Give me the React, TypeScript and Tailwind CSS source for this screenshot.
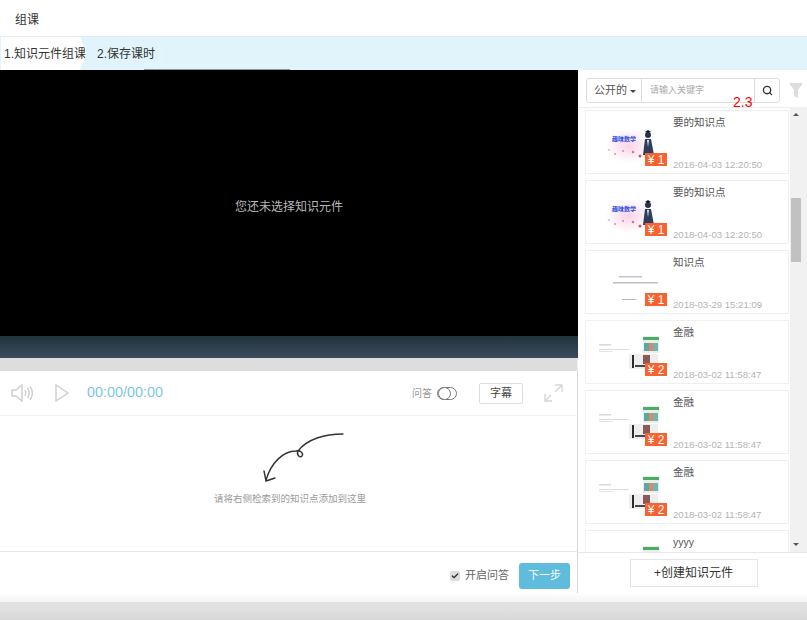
import { Search, Check } from "lucide-react";

type Course = {
  title: string;
  date?: string;
  price?: number;
  thumb: "teach" | "text" | "finance";
};

// last row is cut off by the list, only its title shows
const courses: Course[] = [
  { title: "要的知识点", date: "2018-04-03 12:20:50", price: 1, thumb: "teach" },
  { title: "要的知识点", date: "2018-04-03 12:20:50", price: 1, thumb: "teach" },
  { title: "知识点", date: "2018-03-29 15:21:09", price: 1, thumb: "text" },
  { title: "金融", date: "2018-03-02 11:58:47", price: 2, thumb: "finance" },
  { title: "金融", date: "2018-03-02 11:58:47", price: 2, thumb: "finance" },
  { title: "金融", date: "2018-03-02 11:58:47", price: 2, thumb: "finance" },
  { title: "yyyy", thumb: "finance" },
];

// thumbnails are drawn in card pixels (87x62)
function Thumb({ kind }: { kind: Course["thumb"] }) {
  if (kind === "teach") {
    return (
      <svg width="87" height="62" viewBox="0 0 87 62">
        <defs>
          <radialGradient id="pinkGlow">
            <stop offset="0%" stopColor="#f8d3e8" />
            <stop offset="100%" stopColor="#ffffff" />
          </radialGradient>
        </defs>
        <ellipse cx="43" cy="35" rx="24" ry="17" fill="url(#pinkGlow)" />
        <text x="26" y="30" fontSize="6" fontWeight="700" fill="#2f4ee0">趣味数学</text>
        <circle cx="62" cy="24" r="3" fill="#2b3248" />
        <path d="M59 21l3-2 3 2-3 1z" fill="#161a28" />
        <path d="M59 28h6l3 16H57z" fill="#2f3d5c" />
        <path d="M61 29l1 7 1-7z" fill="#e8e8ee" />
        <circle cx="23" cy="39" r="1" fill="#e7b4bf" />
        <circle cx="29" cy="43" r="1" fill="#dc8f9d" />
        <circle cx="37" cy="40" r="1.100" fill="#dc8f9d" />
        <circle cx="47" cy="41" r="1.300" fill="#d27b8d" />
        <circle cx="54" cy="45" r="1.500" fill="#bf5d72" />
      </svg>
    );
  }
  if (kind === "text") {
    return (
      <svg width="87" height="62" viewBox="0 0 87 62">
        <rect x="33" y="25" width="23" height="1.500" fill="#c4c4ca" />
        <rect x="27" y="31" width="45" height="1.500" fill="#bdbdc5" />
        <rect x="36" y="48" width="14" height="1" fill="#b8b8b8" />
      </svg>
    );
  }
  return (
    <svg width="87" height="62" viewBox="0 0 87 62">
      <rect x="13" y="23" width="12" height="1.500" fill="#d8d8d8" />
      <rect x="13" y="28" width="30" height="1" fill="#dcdcdc" />
      <rect x="13" y="30" width="14" height="1" fill="#e4e4e4" />
      <rect x="57" y="15" width="16" height="17" rx="1" fill="#e9eeec" />
      <rect x="57" y="16" width="16" height="3" fill="#49ad65" />
      <rect x="58" y="22" width="5" height="8" fill="#5ba8a2" />
      <rect x="63" y="22" width="4" height="8" fill="#d98a6a" />
      <rect x="67" y="22" width="5" height="8" fill="#6fb5b0" />
      <rect x="43" y="33" width="29" height="15" rx="1" fill="#eeeeee" />
      <rect x="46" y="34" width="2" height="13" fill="#2e2a2c" />
      <rect x="49" y="44" width="13" height="2" fill="#4a4446" />
      <rect x="57" y="34" width="7" height="9" fill="#8a5a58" />
    </svg>
  );
}

function CourseCard({ course }: { course: Course }) {
  return (
    <div className="flex h-[64px] shrink-0 border border-[#efefef] bg-white">
      <div className="relative w-[87px] shrink-0">
        <Thumb kind={course.thumb} />
        {course.price && (
          <div className="absolute left-[59px] top-[42px] flex h-[13px] w-[22px] items-center justify-center bg-[#f9612e] text-[12px] leading-none text-white">
            ¥ {course.price}
          </div>
        )}
      </div>
      <div className="flex flex-1 flex-col justify-between pb-[1px] pt-[3px]">
        <div className="text-[10.500px] leading-[16px] text-[#555]">{course.title}</div>
        {course.date && <div className="text-[9.600px] leading-[14px] text-[#b4b4b4]">{course.date}</div>}
      </div>
    </div>
  );
}

function SpeakerIcon() {
  return (
    <svg width="22" height="18" viewBox="0 0 22 18" fill="none" stroke="#d0d0d0" strokeWidth="1.500">
      <path d="M1 6h4l6-5v16l-6-5H1z" />
      <path d="M14 6c1 2 1 4 0 6M16.500 4c2 3 2 7 0 10M19 2.500c3 4 3 9 0 13" />
    </svg>
  );
}

function ExpandIcon() {
  return (
    <svg width="19" height="18" viewBox="0 0 19 18" fill="none" stroke="#d4d4d4" strokeWidth="1.400">
      <path d="M11 1h7v7M18 1l-7 7M1 10v7h7M1 17l6-6" />
    </svg>
  );
}

export default function App() {
  return (
    <div
      className="flex h-[620px] w-[807px] flex-col overflow-hidden bg-white text-[#333]"
      style={{ fontFamily: '"Liberation Sans", "Noto Sans CJK SC", sans-serif' }}
    >
      <div className="flex h-[36px] shrink-0 items-center pt-[3px] pl-[15px] text-[12px]">组课</div>

      <div className="relative flex h-[34px] shrink-0 border-t border-[#e5eaee] bg-[#e1f3fb] text-[12px]">
        <div className="ml-[1px] flex w-[86px] items-center whitespace-nowrap bg-white pl-[3px] [clip-path:polygon(0_0,79px_0,86px_50%,79px_100%,0_100%)]">
          1.知识元件组课
        </div>
        <div className="flex w-[76px] items-center whitespace-nowrap pl-[10px]">2.保存课时</div>
        <svg className="absolute left-[154px] top-0" width="10" height="33" viewBox="0 0 10 33" fill="none" stroke="#ecf6fa">
          <path d="M1 0l8 16.500L1 33" />
        </svg>
        <div className="absolute bottom-0 left-[144px] h-[1px] w-[146px] bg-[#8c979d]" />
      </div>

      <div className="flex h-[523px] shrink-0">
        <div className="flex w-[578px] shrink-0 flex-col">
          <div className="flex h-[266px] shrink-0 items-center justify-center bg-black pt-[7px] text-[12px] text-[#b9b9b9]">
            您还未选择知识元件
          </div>
          <div className="h-[22px] shrink-0 bg-gradient-to-b from-[#22333d] to-[#3b4b5c]" />
          <div className="h-[13px] shrink-0 border-r border-[#eeeeee] bg-[#dddddd]" />
          <div className="flex h-[45px] shrink-0 items-center border-b border-r border-b-[#f0f0f0] border-r-[#d8d8d8] pl-[11px]">
            <SpeakerIcon />
            <svg className="ml-[22px]" width="14" height="18" viewBox="0 0 14 18" fill="none" stroke="#d0d0d0" strokeWidth="1.500">
              <path d="M1 1l12 8-12 8z" />
            </svg>
            <span className="ml-[18px] text-[14.400px] text-[#7cc6ea]">00:00/00:00</span>
            <span className="ml-auto text-[10px] text-[#999]">问答</span>
            <div className="ml-[5px] flex h-[13px] w-[20px] items-center rounded-full border border-[#777]">
              <div className="h-[13px] w-[13px] rounded-full border border-[#777] bg-white" />
            </div>
            <button className="ml-[22px] h-[21px] w-[44px] rounded-[2px] border border-[#ddd] bg-white text-[11px] text-[#444]">
              字幕
            </button>
            <div className="ml-[21px] mr-[14px]">
              <ExpandIcon />
            </div>
          </div>
          <div className="flex h-[136px] shrink-0 flex-col items-center border-b border-r border-b-[#e8e8e8] border-r-[#d8d8d8] pt-[17px]">
            <svg className="ml-[31px]" width="82" height="50" viewBox="0 0 82 50" fill="none" stroke="#333" strokeWidth="1.400" strokeLinecap="round">
              <path d="M80 1C62 1 44 6 35 18c-2 4 2 7 4 5 2-3-2-6-6-5C20 18 8 30 3 47" />
              <path d="M1 38l2 10 9-3" />
            </svg>
            <div className="ml-[3px] mt-[9px] text-[9.500px] text-[#9a9a9a]">请将右侧检索到的知识点添加到这里</div>
          </div>
          <div className="flex min-h-0 flex-1 items-center justify-end border-r border-[#d8d8d8] pr-[7px] pt-[6px]">
            <span className="flex h-[10px] w-[10px] items-center justify-center rounded-[2px] bg-[#ddd]">
              <Check className="h-[8px] w-[8px] text-[#333]" strokeWidth={4} />
            </span>
            <span className="ml-[5px] text-[11px] text-[#666]">开启问答</span>
            <button className="ml-[10px] h-[26px] w-[51px] rounded-[3px] bg-[#5fbcdc] text-[11px] text-white">下一步</button>
          </div>
        </div>

        <div className="relative flex min-w-0 flex-1 flex-col">
          <div className="flex h-[38px] shrink-0 items-center border-b border-[#eeeeee] pl-[8px] pt-[4px]">
            <div className="flex h-[25px] w-[194px] rounded-[3px] border border-[#dddddd] text-[11px]">
              <div className="flex w-[55px] items-center justify-center border-r border-[#dddddd] pl-[2px] text-[#555]">
                公开的
                <span className="ml-[3px] mt-[1px] border-x-[3px] border-t-[3px] border-x-transparent border-t-[#444]" />
              </div>
              <div className="flex flex-1 items-center pl-[8px] text-[9px] text-[#aaa]">请输入关键字</div>
              <div className="flex w-[25px] items-center justify-center border-l border-[#dddddd]">
                <Search className="h-[11px] w-[11px] text-[#333]" strokeWidth={3} />
              </div>
            </div>
            <svg className="ml-[9px]" width="14" height="15" viewBox="0 0 14 15">
              <path d="M0 0h14L9 7v8l-4-2V7z" fill="#dddddd" />
            </svg>
          </div>
          <div className="absolute left-[155px] top-[24px] text-[14px] leading-[16px] text-[#f00]">2.3</div>

          <div className="flex min-h-0 flex-1">
            <div className="flex min-w-0 flex-1 flex-col gap-[6px] overflow-hidden pl-[7px] pr-[1px] pt-[2px]">
              {courses.map((c, i) => (
                <CourseCard key={i} course={c} />
              ))}
            </div>
            <div className="flex w-[17px] shrink-0 flex-col items-center bg-[#f1f1f1] pr-[5px]">
              <span className="mt-[5px] border-x-[3px] border-b-[3px] border-x-transparent border-b-[#555]" />
              <div className="mt-[82px] h-[64px] w-[10px] bg-[#c1c1c1]" />
              <span className="mb-[6px] mt-auto border-x-[3px] border-t-[3px] border-x-transparent border-t-[#555]" />
            </div>
          </div>

          <div className="flex h-[41px] shrink-0 items-center justify-center border-t border-[#e8e8e8] bg-white pl-[2px]">
            <button className="h-[28px] w-[128px] border border-[#dfe5ea] bg-white text-[12px] text-[#333]">
              +创建知识元件
            </button>
          </div>
        </div>
      </div>

      <div className="h-[9px] shrink-0 bg-gradient-to-b from-white to-[#f3f3f3]" />
      <div className="flex-1 bg-gradient-to-b from-[#e4e4e4] to-[#d8d8d8]" />
    </div>
  );
}
